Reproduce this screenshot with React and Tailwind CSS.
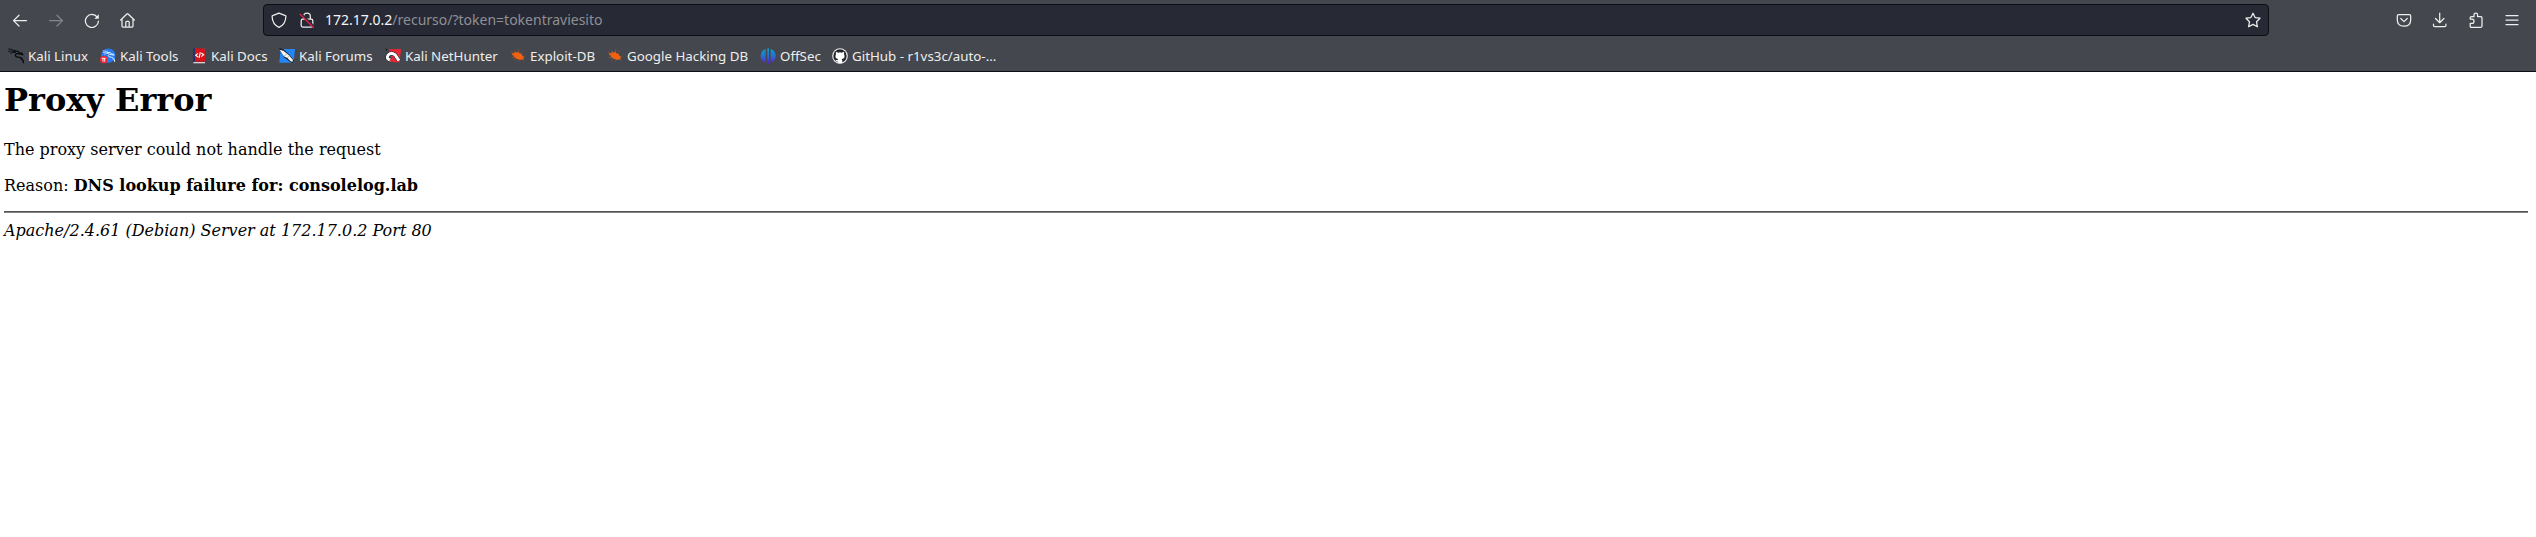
function Icon({ className = "", children }) {
  return (
    <svg
      viewBox="0 0 16 16"
      className={"size-4 shrink-0 " + className}
      fill="none"
      stroke="currentColor"
      strokeWidth="1.25"
      strokeLinecap="round"
      strokeLinejoin="round"
    >
      {children}
    </svg>
  );
}

function Favicon({ children }) {
  return (
    <svg viewBox="0 0 48 48" className="size-4 shrink-0">
      {children}
    </svg>
  );
}

const Bug = () => (
  <Favicon>
    <g stroke="#a35a30" strokeWidth="1.8" fill="none">
      <path d="M14 7 18 15M27 4 24 14M34 13 38 10M38 25H46M5 30 14 26M12 36 20 31M25 40 27 34M3 12 12 17" />
    </g>
    <path d="M5 15 12 17 14 11 19 14 25 11 28 16 35 17 37 23 42 27 40 31 42 36 35 34 30 37 26 33 20 33 18 29 11 28 13 24 7 21Z" fill="#f0620f" />
  </Favicon>
);

const Dragon = ({ color }) => (
  <g stroke={color} fill="none" strokeLinecap="round">
    <path d="M2 3Q15 3 22 9M2 10Q12 7 20 12M7 16Q14 11 23 13" strokeWidth="2.6" />
    <path d="M19 9Q31 8 36 16 42 13 44 20L35 18Q23 14 22 21 22 28 34 28 45 29 46 44" strokeWidth="3.8" />
    <path d="M38 34Q43 34 47 38" strokeWidth="2" />
  </g>
);

const bookmarks = [
  { label: "Kali Linux", width: "w-[92px]", icon: <Favicon><Dragon color="#08090b" /></Favicon> },
  {
    label: "Kali Tools",
    width: "w-[91px]",
    icon: (
      <Favicon>
        <circle cx="25" cy="23" r="21.5" fill="#267bf4" />
        <g transform="translate(8 6) scale(.78)"><Dragon color="#e6f1ff" /></g>
        <circle cx="11" cy="35" r="11.5" fill="#e52a36" />
        <path d="M5 31H17M9 31V41M14 31V41" stroke="#fff" strokeWidth="2.6" />
      </Favicon>
    ),
  },
  {
    label: "Kali Docs",
    width: "w-[88px]",
    icon: (
      <Favicon>
        <path d="M6 1H12V44H6Z" fill="#26336b" />
        <path d="M12 1H42V41H12Z" fill="#d91219" />
        <path d="M37 1H42V10Z" fill="#8b3c50" />
        <path d="M7 42H42V46H7Z" fill="#d9cfd0" />
        <path d="M21 16 14 21.5 21 27M31 15 38 20.5 31 26M28 13 24 30" stroke="#fff" strokeWidth="3.4" fill="none" />
      </Favicon>
    ),
  },
  {
    label: "Kali Forums",
    width: "w-[106px]",
    icon: (
      <Favicon>
        <path d="M5 3H48L44 44H1Z" fill="#2486f5" />
        <path d="M0 0 13 4 31 20 45 37 42 45 34 42 14 27Z" fill="#17191f" />
        <path d="M2 5 13 8 30 22 42 36 40 42 33 38 25 30 14 25 8 15Z" fill="#f7f7f7" />
        <path d="M15 24 23 19M25 29 32 24" stroke="#6d7078" strokeWidth="1.5" />
      </Favicon>
    ),
  },
  {
    label: "Kali NetHunter",
    width: "w-[125px]",
    icon: (
      <Favicon>
        <path d="M11 4 48 3 44 43H23Z" fill="#eb2635" />
        <path d="M1 1 8 5 4 8Z" fill="#16171b" />
        <path d="M18 37Q2 34 9 22 17 11 30 20L42 38" stroke="#15171b" strokeWidth="12" fill="none" />
        <path d="M18 37Q2 34 9 22 17 11 30 20L42 38" stroke="#fff" strokeWidth="9" fill="none" />
        <path d="M14 36 22 38" stroke="#eb2635" strokeWidth="6" />
      </Favicon>
    ),
  },
  { label: "Exploit-DB", width: "w-[97px]", icon: <Bug /> },
  { label: "Google Hacking DB", width: "w-[153px]", icon: <Bug /> },
  {
    label: "OffSec",
    width: "w-[72px]",
    icon: (
      <Favicon>
        <defs>
          <linearGradient id="offsec" x1="0" y1="0" x2="0" y2="1">
            <stop offset="0" stopColor="#139bc3" />
            <stop offset=".5" stopColor="#2870cf" />
            <stop offset="1" stopColor="#5b20cf" />
          </linearGradient>
        </defs>
        <path d="M17 3V44Q2 39 2 24 2 8 17 3ZM22 1H27V47H22ZM32 3Q47 8 47 24 47 39 32 44Z" fill="url(#offsec)" />
      </Favicon>
    ),
  },
  {
    label: "GitHub - r1vs3c/auto-…",
    width: "w-[170px]",
    icon: (
      <Favicon>
        <circle cx="24" cy="24" r="23.5" fill="#eeeeef" />
        <circle cx="24" cy="24" r="20" fill="#202329" />
        <path d="M12 11 19 14Q24 12 29 14L36 11Q37 15 36 18 42 31 29 34L31 38V44Q24 47 17 44V40Q12 41 10 35 14 37 17 36L19 34Q6 31 12 18 11 15 12 11Z" fill="#fff" />
      </Favicon>
    ),
  },
];

export default function App() {
  return (
    <div className="flex h-[537px] w-full flex-col bg-white">
      <header className="flex h-[72px] shrink-0 flex-col border-b border-[#0c0c13] bg-[#44474e] font-['Noto_Sans',sans-serif] text-[#eeeeec]">
        <div className="flex h-10 items-center">
          <nav className="flex w-[263px] items-center gap-5 pl-3">
            <Icon><path d="M14.5 8.6H1.5M7 3.2 1.5 8.6 7 14" /></Icon>
            <Icon className="text-[#85868a]"><path d="M1.5 8.6H14.5M9 3.2 14.5 8.6 9 14" /></Icon>
            <Icon>
              <path d="M13.2 5.2A6.5 6.5 0 1 0 14.4 9.2" />
              <path d="M14.8 2.3V6.7H10.4Z" fill="currentColor" stroke="none" />
            </Icon>
            <Icon>
              <path d="M.7 8 6.9 2Q7.5 1.5 8.1 2L14.3 8M2 7V14Q2 15 3 15H12Q13 15 13 14V7M5.8 14.8V10.2Q5.8 9.3 6.7 9.3H8.3Q9.2 9.3 9.2 10.2V14.8" />
            </Icon>
          </nav>
          <div className="flex h-8 w-[2006px] items-center rounded border border-[#0d0e13] bg-[#272935] pr-[7px] pl-[7px]">
            <Icon><path d="M8 1.2 14.4 3.6Q15 3.8 14.9 4.5C14.7 9.8 12.3 13.5 8 15.3 3.7 13.5 1.3 9.8 1.1 4.5Q1 3.8 1.6 3.6Z" /></Icon>
            <Icon className="ml-3 overflow-visible">
              <path d="M4.7 7V4.2Q4.7 1.2 8 1.2T11.3 4.2V7M3.7 7.2H12.3Q13.8 7.2 13.8 8.7V13.6Q13.8 15.1 12.3 15.1H3.7Q2.2 15.1 2.2 13.6V8.7Q2.2 7.2 3.7 7.2Z" />
              <path d="M1.9 1.8 15.2 14.8" stroke="#272935" strokeWidth="2" />
              <path d="M1.1 2.2 14.5 15.4" stroke="#e2224c" strokeWidth="1.35" />
            </Icon>
            <span className="ml-[10px] grow text-[14px] leading-5 whitespace-nowrap text-[#8f9094]">
              <span className="text-[#f5f5f5]">172.17.0.2</span>/recurso/?token=tokentraviesito
            </span>
            <Icon>
              <path d="M8 1.2 10.1 5.6 15 6.2 11.5 9.7 12.4 14.8 8 12.4 3.6 14.8 4.5 9.7 1 6.2 5.9 5.6Z" />
            </Icon>
          </div>
          <div className="ml-auto flex items-center gap-5 pr-4">
            <Icon>
              <path d="M2.7 2.6H13.3Q14.7 2.6 14.7 4V7.7Q14.7 14.2 8 14.2T1.3 7.7V4Q1.3 2.6 2.7 2.6ZM4.8 6.5 8 9.6 11.2 6.5" />
            </Icon>
            <Icon><path d="M7.7 1V10.5M3.5 6.5 7.7 10.7 11.9 6.5M1.5 12V13.4Q1.5 14.6 2.7 14.6H12.7Q13.9 14.6 13.9 13.4V12" /></Icon>
            <Icon>
              <path d="M2.2 7V5.8Q2.2 4.7 3.3 4.7H6V2.7Q6 1 7.8 1T9.6 2.7V4.7H12.8Q14 4.7 14 5.8V14.1Q14 15.3 12.8 15.3H3.3Q2.2 15.3 2.2 14.1V11.4H4.2Q6 11.4 6 9.2T4.2 7Z" />
            </Icon>
            <Icon><path d="M2 3.5H14M2 8H14M2 12.5H14" /></Icon>
          </div>
        </div>
        <div className="flex h-[31px] items-center pt-px pl-2 text-[13.33px] leading-5">
          {bookmarks.map(({ label, width, icon }) => (
            <div key={label} className={"flex shrink-0 items-center gap-1 whitespace-nowrap " + width}>
              {icon}
              <span>{label}</span>
            </div>
          ))}
        </div>
      </header>
      <main className="pt-[9px] pr-2 pl-1 font-['DejaVu_Serif',serif] text-base leading-[19px] text-black">
        <h1 className="text-[32px] leading-[38px] font-bold">Proxy Error</h1>
        <p className="mt-[21px]">The proxy server could not handle the request</p>
        <p className="mt-[17px]">
          Reason: <strong>DNS lookup failure for: consolelog.lab</strong>
        </p>
        <hr className="mt-4 h-[2px] border-t border-b border-t-[#555555] border-b-[#808080]" />
        <address className="mt-2">Apache/2.4.61 (Debian) Server at 172.17.0.2 Port 80</address>
      </main>
    </div>
  );
}
